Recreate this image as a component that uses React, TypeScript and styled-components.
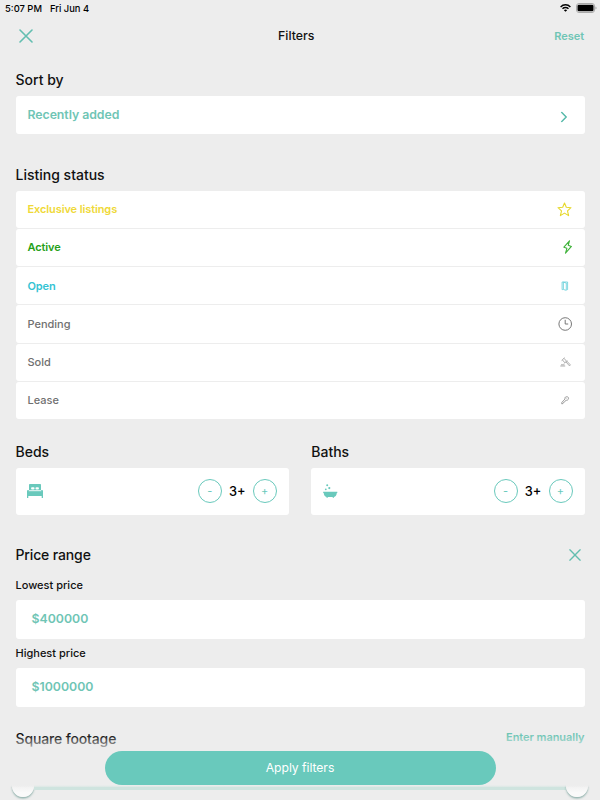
import React from "react";
import styled, { createGlobalStyle } from "styled-components";

const teal = "#69c9bc";
const tealText = "#6fc5b5";

const GlobalStyle = createGlobalStyle`
  * { box-sizing: border-box; }
  html, body { margin: 0; padding: 0; }
  body {
    background: #ededed;
    font-family: Inter, "Liberation Sans", sans-serif;
    color: #111;
    overflow: hidden;
  }
  button { font-family: inherit; margin: 0; padding: 0; border: 0; background: none; }
  svg { display: block; flex: none; }
`;

const Screen = styled.main`
  position: relative;
  width: 600px;
  height: 800px;
  overflow: hidden;
  background: #ededed;
  display: flex;
  flex-direction: column;
`;

const StatusBar = styled.div`
  height: 16px;
  flex: none;
  padding: 0 3px 0 5px;
  display: flex;
  justify-content: space-between;
  align-items: center;
  font-size: 9.4px;
  font-weight: 500;
  color: #000;
`;

const StatusGroup = styled.div<{ $gap: number }>`
  display: flex;
  align-items: center;
  gap: ${(p) => p.$gap}px;
  white-space: nowrap;
`;

const Header = styled.header`
  height: 39px;
  flex: none;
  padding: 0 16px 0 19px;
  display: grid;
  grid-template-columns: 80px 1fr 80px;
  align-items: center;
`;

const Title = styled.h1`
  margin: 1px 10.5px 0 0;
  text-align: center;
  font-size: 12.3px;
  line-height: 16px;
  font-weight: 500;
`;

const TextButton = styled.button`
  color: ${tealText};
  font-size: 11px;
  line-height: 14px;
  font-weight: 600;
  text-align: right;
  letter-spacing: -0.05px;
`;

const ManualButton = styled(TextButton)`
  margin-top: 1px;
`;

const IconButton = styled.button<{ $right?: number }>`
  display: flex;
  align-items: center;
  margin-right: ${(p) => p.$right ?? 0}px;
`;

const Content = styled.div`
  flex: none;
  display: flex;
  flex-direction: column;
  padding: 1px 15.5px 0;
`;

const Section = styled.section<{ $top: number }>`
  padding-top: ${(p) => p.$top}px;
`;

const SectionHead = styled.div<{ $align?: string }>`
  display: flex;
  justify-content: space-between;
  align-items: ${(p) => p.$align ?? "center"};
  height: 20px;
`;

const Heading = styled.h2<{ $tight?: boolean }>`
  margin: 0;
  font-size: 14px;
  line-height: 20px;
  font-weight: 500;
  letter-spacing: ${(p) => (p.$tight ? "-0.14px" : "0")};
`;

const Card = styled.div<{ $height: number; $top?: number }>`
  display: flex;
  align-items: center;
  justify-content: space-between;
  height: ${(p) => p.$height}px;
  margin-top: ${(p) => p.$top ?? 6}px;
  padding: 0 12px;
  background: #fff;
  border-radius: 3px;
`;

const SortValue = styled.span`
  color: ${tealText};
  font-size: 12.3px;
  line-height: 16px;
  font-weight: 600;
  letter-spacing: -0.05px;
`;

const StatusList = styled.ul`
  list-style: none;
  margin: 6px 0 0;
  padding: 0;
  display: flex;
  flex-direction: column;
  gap: 1px;
`;

const StatusRow = styled.li<{ $color: string; $bold?: boolean }>`
  height: 37.25px;
  padding: 0 12.5px 0 12px;
  display: flex;
  align-items: center;
  justify-content: space-between;
  border-radius: 3px;
  background: #fff;
  color: ${(p) => p.$color};
  font-size: 11px;
  font-weight: ${(p) => (p.$bold ? 600 : 500)};
  letter-spacing: ${(p) => (p.$bold ? "-0.1px" : "-0.02px")};
`;

const Rooms = styled.div`
  display: grid;
  grid-template-columns: 1fr 1fr;
  gap: 22.5px;
`;

const RoomCard = styled(Card)`
  padding: 0 12px 1px 11px;
`;

const Counter = styled.div`
  display: flex;
  align-items: center;
`;

const Count = styled.span`
  width: 31px;
  text-align: center;
  font-size: 12.8px;
  font-weight: 500;
  color: #000;
`;

const RoundButton = styled.button`
  width: 24px;
  height: 24px;
  border: 1px solid ${teal};
  border-radius: 50%;
  color: ${teal};
  font-size: 11px;
  line-height: 23px;
`;

const FieldLabel = styled.label<{ $top: number }>`
  display: block;
  margin-top: ${(p) => p.$top}px;
  font-size: 11px;
  line-height: 16px;
  font-weight: 500;
`;

const PriceField = styled(Card)`
  padding: 0 16px 1px;
  color: ${tealText};
  font-size: 12.3px;
  font-weight: 600;
`;

const Slider = styled.div`
  flex: none;
  height: 24px;
  margin: 24.5px 12.3px 0;
  display: flex;
  justify-content: space-between;
  align-items: center;
`;

const Track = styled.div`
  flex: 1;
  height: 8px;
  background: #cfe4df;
`;

const Thumb = styled.div`
  width: 22px;
  height: 22px;
  flex: none;
  border-radius: 50%;
  background: linear-gradient(#efefef 45%, #fafafa 80%);
  box-shadow: 0 1.5px 2px rgba(70, 130, 120, 0.55);
`;

const Footer = styled.footer`
  position: absolute;
  left: 0;
  right: 0;
  top: 732px;
  height: 55px;
  padding-top: 18.5px;
  display: flex;
  justify-content: center;
  align-items: flex-start;
  background: linear-gradient(rgba(237, 237, 237, 0) 3px, #ededed 21px, #ededed 53px, rgba(237, 237, 237, 0.4) 55px);
`;

const ApplyButton = styled.button`
  width: 391px;
  height: 34px;
  flex: none;
  border-radius: 17px;
  background: ${teal};
  color: #fff;
  font-size: 12.2px;
  letter-spacing: -0.05px;
`;

const Cross = ({ size }: { size: number }) => (
  <svg width={size} height={size} viewBox="0 0 14 14" fill="none" stroke="#62beb0" strokeWidth="1.6" strokeLinecap="round">
    <path d="M1 1L13 13M13 1L1 13" />
  </svg>
);

const Wifi = () => (
  <svg width="11" height="8" viewBox="0 0 11 8" fill="none" stroke="#000" strokeWidth="1.4">
    <path d="M.6 2.9C3.3.1 7.7.1 10.4 2.9M2.5 4.8c1.7-1.7 4.3-1.7 6 0" />
    <path d="M5.5 7.8L3.9 6.2c.9-.8 2.3-.8 3.2 0z" fill="#000" stroke="none" />
  </svg>
);

const Battery = () => (
  <svg width="21" height="10" viewBox="0 0 21 10">
    <rect x=".5" y=".5" width="18" height="9" rx="2.5" fill="none" stroke="#aaa" />
    <rect x="1.5" y="1.7" width="16" height="6.6" rx="1.4" fill="#000" />
    <path d="M19.5 3.5c1.3.5 1.3 2.5 0 3z" fill="#999" />
  </svg>
);

const Chevron = () => (
  <svg width="18" height="11" viewBox="0 0 18 11" fill="none" stroke="#55b9a9" strokeWidth="1.4" transform="translate(0 1.5)">
    <path d="M6.3 .6L11.2 5.5L6.3 10.4" />
  </svg>
);

const Star = () => (
  <svg width="15" height="15" viewBox="0 0 15 15" fill="none" stroke="#e6d82c" strokeWidth="1.1" strokeLinejoin="round">
    <path d="M7.5 1L9.3 5.3L14 5.7L10.5 8.8L11.6 13.6L7.5 11.1L3.4 13.6L4.5 8.8L1 5.7L5.7 5.3Z" />
  </svg>
);

const Bolt = () => (
  <svg width="9" height="14" viewBox="-.5 0 9 14" fill="none" stroke="#3fb23a" strokeWidth="1.1" strokeLinejoin="round">
    <path d="M6 .8L.4 7.2L3.4 8.3L2 13.2L7.9 6.4L4.7 5.3Z" />
  </svg>
);

const Door = () => (
  <svg width="15" height="10" viewBox="-.7 0 15 10" fill="none" stroke="#62ced9" strokeWidth=".8">
    <path d="M5.2 8.6H4.4V1H9.9V8.6H9.2" />
    <path d="M5.7 1.2L8.6 2V9.3L5.7 8.5Z" />
  </svg>
);

const Clock = () => (
  <svg width="14" height="14" viewBox="-.2 0 14 14" fill="none" stroke="#777">
    <circle cx="7" cy="7" r="6.3" />
    <path d="M7 2.8V7H10" />
  </svg>
);

const Gavel = () => (
  <svg width="14" height="10" viewBox="-.6 0 14 10" fill="none" stroke="#999" strokeWidth=".8">
    <path d="M3 3.6L6 .7M5.6 6.5L8.6 3.5M3.8 2.9L6.3 5.8M5.4 1.3L7.9 4.2M7.2 4.8L10.9 8.9M8.1 4L11.8 7.9L10.9 8.9" />
    <path d="M1.7 9H6.6M2.4 7.8H5.9" />
  </svg>
);

const LeaseKey = () => (
  <svg width="15" height="9" viewBox="-.9 0 15 9" fill="none" stroke="#888" strokeWidth=".8" strokeLinejoin="round">
    <path d="M7.1 3C6.5 1.1 8.2.4 9.5.8C11.1 1.2 11 3.4 9.6 4.1C8.8 4.5 8.2 4.2 7.8 4.4L6.6 6.1L5.5 6.4L5.1 7.6L3.8 7.8L3.9 6.4Z" />
    <path d="M8.6 2.2L9.3 2.8" />
  </svg>
);

const Bed = () => (
  <svg width="16" height="14" viewBox="0 0 16 14" fill={teal}>
    <path d="M2 .7Q2 0 2.7 0H13.3Q14 0 14 .7V6H2Z" />
    <path d="M0 7Q0 6 1 6H15Q16 6 16 7V14H14.7V12H1.3V14H0Z" />
    <rect x="4.1" y="3.2" width="3.4" height="2.2" rx=".9" fill="#fff" />
    <rect x="8.5" y="3.2" width="3.4" height="2.2" rx=".9" fill="#fff" />
    <path d="M1.7 6.7H14.3" stroke="#fff" strokeWidth=".9" />
  </svg>
);

const Bath = () => (
  <svg width="16" height="14" viewBox="-1 0 16 14" fill={teal}>
    <circle cx="4.2" cy="1.2" r="1" />
    <circle cx="6.3" cy="4.1" r="1.1" />
    <circle cx="2.8" cy="5.3" r=".9" />
    <path d="M.2 7.8H14.3V8.9H13.8C13.6 11.1 12.5 12.7 11 12.9V13.7H9.7V13H4.8V13.7H3.5V12.9C2 12.6.9 11.1.7 8.9H.2Z" />
  </svg>
);

const statuses = [
  { label: "Exclusive listings", color: "#efd938", bold: true, icon: <Star /> },
  { label: "Active", color: "#25a018", bold: true, icon: <Bolt /> },
  { label: "Open", color: "#35c3d3", bold: true, icon: <Door /> },
  { label: "Pending", color: "#707070", icon: <Clock /> },
  { label: "Sold", color: "#707070", icon: <Gavel /> },
  { label: "Lease", color: "#707070", icon: <LeaseKey /> },
];

const RoomCounter = ({ title, icon }: { title: string; icon: React.ReactNode }) => (
  <div>
    <Heading>{title}</Heading>
    <RoomCard $height={47}>
      {icon}
      <Counter>
        <RoundButton>-</RoundButton>
        <Count>3+</Count>
        <RoundButton>+</RoundButton>
      </Counter>
    </RoomCard>
  </div>
);

export default function App() {
  return (
    <>
      <GlobalStyle />
      <Screen>
        <StatusBar>
          <StatusGroup $gap={8}>
            <span>5:07 PM</span>
            <span>Fri Jun 4</span>
          </StatusGroup>
          <StatusGroup $gap={5}>
            <Wifi />
            <Battery />
          </StatusGroup>
        </StatusBar>
        <Header>
          <IconButton aria-label="Close"><Cross size={14} /></IconButton>
          <Title>Filters</Title>
          <TextButton>Reset</TextButton>
        </Header>
        <Content>
          <Section $top={14}>
            <Heading>Sort by</Heading>
            <Card $height={38}>
              <SortValue>Recently added</SortValue>
              <Chevron />
            </Card>
          </Section>
          <Section $top={30.5}>
            <Heading>Listing status</Heading>
            <StatusList>
              {statuses.map((s) => (
                <StatusRow key={s.label} $color={s.color} $bold={s.bold}>
                  {s.label}
                  {s.icon}
                </StatusRow>
              ))}
            </StatusList>
          </Section>
          <Section $top={23}>
            <Rooms>
              <RoomCounter title="Beds" icon={<Bed />} />
              <RoomCounter title="Baths" icon={<Bath />} />
            </Rooms>
          </Section>
          <Section $top={30}>
            <SectionHead>
              <Heading $tight>Price range</Heading>
              <IconButton aria-label="Clear price range" $right={3.5}><Cross size={12} /></IconButton>
            </SectionHead>
            <FieldLabel $top={12}>Lowest price</FieldLabel>
            <PriceField $height={38.5} $top={7}>$400000</PriceField>
            <FieldLabel $top={6.5}>Highest price</FieldLabel>
            <PriceField $height={38.5} $top={7}>$1000000</PriceField>
          </Section>
          <Section $top={22.5}>
            <SectionHead $align="flex-start">
              <Heading $tight>Square footage</Heading>
              <ManualButton>Enter manually</ManualButton>
            </SectionHead>
          </Section>
        </Content>
        <Slider>
          <Thumb />
          <Track />
          <Thumb />
        </Slider>
        <Footer>
          <ApplyButton>Apply filters</ApplyButton>
        </Footer>
      </Screen>
    </>
  );
}
